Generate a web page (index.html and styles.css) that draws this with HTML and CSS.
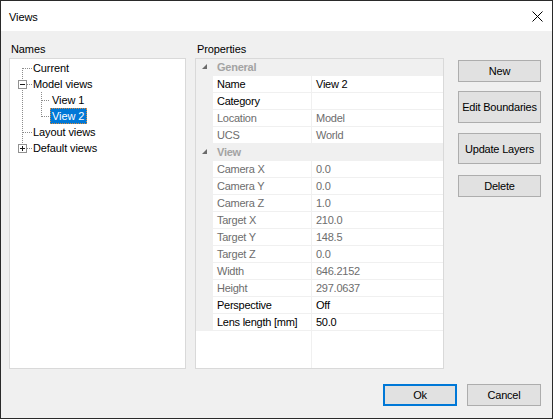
FILE: index.html
```html
<!DOCTYPE html>
<html>
<head>
<meta charset="utf-8">
<link rel="stylesheet" href="styles.css">
</head>
<body>
<div class="window">
  <div class="titlebar">
    <span class="title">Views</span>
    <svg class="close" width="11" height="11" viewBox="0 0 11 11"><path d="M0.5 0.5 L10.5 10.5 M10.5 0.5 L0.5 10.5" stroke="#000" stroke-width="1" fill="none"/></svg>
  </div>
  <div class="client">
    <div class="main">
      <div class="names">
        <div class="label">Names</div>
        <div class="tree">
          <svg class="treelines" width="175" height="120" viewBox="0 0 175 120">
            <g stroke="#8c8c8c" stroke-width="1" stroke-dasharray="1 1" fill="none">
              <path d="M12.5 9 V90"/>
              <path d="M13 9.5 H22"/>
              <path d="M17 25.5 H22"/>
              <path d="M13 73.5 H22"/>
              <path d="M17 89.5 H22"/>
              <path d="M31.5 33 V58"/>
              <path d="M32 41.5 H40"/>
              <path d="M32 57.5 H40"/>
            </g>
            <rect x="8.5" y="21.5" width="8" height="8" fill="#fff" stroke="#919191"/>
            <path d="M10 25.5 H15" stroke="#1a1a1a"/>
            <rect x="8.5" y="85.5" width="8" height="8" fill="#fff" stroke="#919191"/>
            <path d="M10 89.5 H15 M12.5 87 V92" stroke="#1a1a1a"/>
          </svg>
          <div class="item"><span class="txt">Current</span></div>
          <div class="item"><span class="txt">Model views</span></div>
          <div class="item lvl1"><span class="txt">View 1</span></div>
          <div class="item lvl1"><span class="txt sel">View 2</span></div>
          <div class="item"><span class="txt">Layout views</span></div>
          <div class="item"><span class="txt">Default views</span></div>
        </div>
      </div>
      <div class="props">
        <div class="label">Properties</div>
        <div class="grid">
          <div class="row head"><div class="gut"><svg width="6" height="6" viewBox="0 0 6 6"><path d="M5 0 V5 H0 Z" fill="#6b6b6b"/></svg></div><div class="cat">General</div></div>
          <div class="row"><div class="gut"></div><div class="key">Name</div><div class="val">View 2</div></div>
          <div class="row"><div class="gut"></div><div class="key">Category</div><div class="val"></div></div>
          <div class="row dis"><div class="gut"></div><div class="key">Location</div><div class="val">Model</div></div>
          <div class="row dis"><div class="gut"></div><div class="key">UCS</div><div class="val">World</div></div>
          <div class="row head"><div class="gut"><svg width="6" height="6" viewBox="0 0 6 6"><path d="M5 0 V5 H0 Z" fill="#6b6b6b"/></svg></div><div class="cat">View</div></div>
          <div class="row dis"><div class="gut"></div><div class="key">Camera X</div><div class="val">0.0</div></div>
          <div class="row dis"><div class="gut"></div><div class="key">Camera Y</div><div class="val">0.0</div></div>
          <div class="row dis"><div class="gut"></div><div class="key">Camera Z</div><div class="val">1.0</div></div>
          <div class="row dis"><div class="gut"></div><div class="key">Target X</div><div class="val">210.0</div></div>
          <div class="row dis"><div class="gut"></div><div class="key">Target Y</div><div class="val">148.5</div></div>
          <div class="row dis"><div class="gut"></div><div class="key">Target Z</div><div class="val">0.0</div></div>
          <div class="row dis"><div class="gut"></div><div class="key">Width</div><div class="val">646.2152</div></div>
          <div class="row dis"><div class="gut"></div><div class="key">Height</div><div class="val">297.0637</div></div>
          <div class="row"><div class="gut"></div><div class="key">Perspective</div><div class="val">Off</div></div>
          <div class="row"><div class="gut"></div><div class="key">Lens length [mm]</div><div class="val">50.0</div></div>
          <div class="filler"><div class="fillkey"></div></div>
        </div>
      </div>
      <div class="buttons">
        <div class="btn b-new">New</div>
        <div class="btn b-edit">Edit Boundaries</div>
        <div class="btn b-upd">Update Layers</div>
        <div class="btn b-del">Delete</div>
      </div>
    </div>
    <div class="footer">
      <div class="btn b-ok">Ok</div>
      <div class="btn b-cancel">Cancel</div>
    </div>
  </div>
</div>
</body>
</html>
```
FILE: styles.css
```css
html, body {
  margin: 0;
  padding: 0;
  background: #f0f0f0;
}
body {
  font-family: "Liberation Sans", Arial, sans-serif;
  font-size: 11px;
  color: #000;
}
.window {
  width: 553px;
  height: 419px;
  box-sizing: border-box;
  border: 1px solid #2a2a2a;
  background: #f0f0f0;
  display: flex;
  flex-direction: column;
}
.titlebar {
  height: 30px;
  background: #fff;
  display: flex;
  align-items: center;
  justify-content: space-between;
  padding-left: 8px;
  padding-right: 9px;
}
.title {
  font-size: 11px;
  letter-spacing: -0.1px;
  line-height: 30px;
  padding-top: 1px;
}
.close {
  display: block;
  margin-top: 1px;
}
.client {
  flex: 1;
  display: flex;
  flex-direction: column;
  padding: 10px 11px 0 8px;
}
.main {
  display: flex;
  height: 328px;
}
.label {
  height: 17px;
  line-height: 16px;
  padding-left: 2px;
  letter-spacing: -0.1px;
}
.names {
  width: 177px;
  display: flex;
  flex-direction: column;
}
.tree {
  position: relative;
  height: 311px;
  box-sizing: border-box;
  border: 1px solid #d9d9d9;
  background: #fff;
  padding-top: 1px;
}
.treelines {
  position: absolute;
  left: 0;
  top: 0;
}
.item {
  height: 16px;
  line-height: 16px;
  padding-left: 21px;
  white-space: nowrap;
  letter-spacing: -0.1px;
}
.item.lvl1 {
  padding-left: 40px;
}
.txt {
  display: inline-block;
  height: 16px;
  padding: 0 2px;
  box-sizing: border-box;
}
.txt.sel {
  background: #0078d7;
  color: #fff;
  border: 1px dotted #d98a3c;
  padding: 0 2px 0 1px;
  line-height: 14px;
}
.props {
  width: 249px;
  margin-left: 9px;
  display: flex;
  flex-direction: column;
}
.props .label {
  padding-left: 2px;
}
.grid {
  height: 311px;
  box-sizing: border-box;
  border: 1px solid #d9d9d9;
  background: #fff;
  display: flex;
  flex-direction: column;
}
.row {
  display: flex;
  height: 17px;
  box-sizing: border-box;
  border-bottom: 1px solid #f0f0f0;
  line-height: 15px;
  letter-spacing: -0.25px;
}
.gut {
  width: 17px;
  background: #f0f0f0;
  display: flex;
  align-items: center;
  justify-content: center;
  padding-left: 1px;
  box-sizing: border-box;
}
.row.head {
  background: #f0f0f0;
}
.cat {
  padding: 1px 0 0 4px;
  font-weight: bold;
  color: #a3a3a3;
}
.key {
  width: 99px;
  box-sizing: border-box;
  border-right: 1px solid #f0f0f0;
  padding: 1px 0 0 4px;
  white-space: nowrap;
}
.val {
  flex: 1;
  padding: 1px 0 0 4px;
}
.row.dis .key, .row.dis .val {
  color: #6d6d6d;
}
.filler {
  flex: 1;
  display: flex;
}
.fillkey {
  width: 116px;
  box-sizing: border-box;
  border-right: 1px solid #f0f0f0;
}
.buttons {
  width: 83px;
  margin-left: 14px;
  display: flex;
  flex-direction: column;
  padding-top: 19px;
}
.btn {
  box-sizing: border-box;
  background: #e1e1e1;
  border: 1px solid #adadad;
  display: flex;
  align-items: center;
  justify-content: center;
  white-space: nowrap;
  letter-spacing: -0.2px;
}
.b-new { height: 22px; }
.b-edit { height: 32px; margin-top: 9px; }
.b-upd { height: 31px; margin-top: 10px; }
.b-del { height: 22px; margin-top: 11px; }
.footer {
  display: flex;
  justify-content: flex-end;
  margin-top: 15px;
}
.b-ok, .b-cancel {
  width: 74px;
  height: 22px;
}
.b-ok {
  border: 2px solid #0078d7;
}
.b-cancel {
  margin-left: 10px;
}
```
